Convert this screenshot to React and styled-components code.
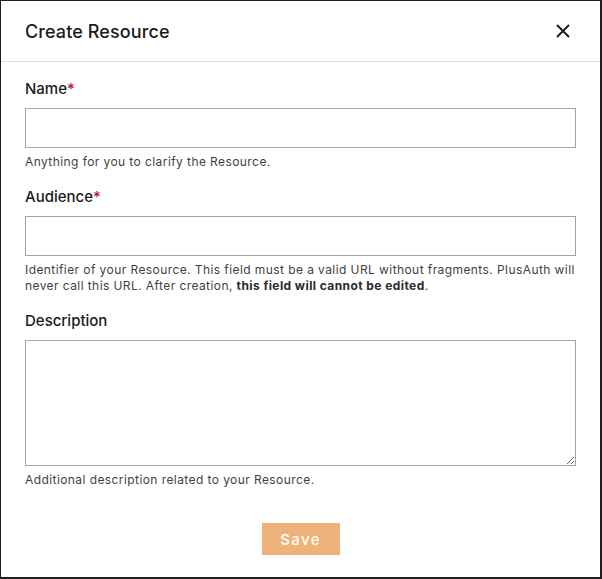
import React from 'react';
import styled, { createGlobalStyle } from 'styled-components';

const GlobalStyle = createGlobalStyle`
	* {
		box-sizing: border-box;
	}
	body {
		margin: 0;
		background: #fff;
		font-family: Inter, 'Noto Sans', sans-serif;
	}
`;

const Modal = styled.div`
	width: 602px;
	height: 579px;
	border: 1px solid #1e1e1e;
	border-right-width: 2px;
	border-bottom-width: 2px;
	background: #fff;
	display: flex;
	flex-direction: column;
`;

const Header = styled.header`
	height: 61px;
	display: flex;
	align-items: center;
	justify-content: space-between;
	padding: 0 25px 0 24px;
	border-bottom: 1px solid #dedede;
	flex-shrink: 0;
`;

const Title = styled.h2`
	margin: 0;
	font-size: 18px;
	font-weight: 500;
	color: #1a1a1a;
	letter-spacing: 0.1px;
`;

const CloseButton = styled.button`
	border: none;
	background: none;
	padding: 0;
	width: 24px;
	height: 24px;
	display: flex;
	align-items: center;
	justify-content: center;
	cursor: pointer;
	color: #1a1a1a;
`;

const Body = styled.form`
	padding: 17px 24px 0 24px;
	display: flex;
	flex-direction: column;
`;

const Field = styled.div`
	display: flex;
	flex-direction: column;
	margin-bottom: 17px;
`;

const Label = styled.label`
	font-size: 15px;
	font-weight: 500;
	color: #1a1a1a;
	line-height: 20px;
	margin-bottom: 9px;
`;

const Required = styled.span`
	color: #b3202a;
`;

const Input = styled.input`
	height: 40px;
	border: 1px solid #a3a3a3;
	border-radius: 0;
	padding: 0 10px;
	font-family: inherit;
	font-size: 14px;
	margin-bottom: 6px;
`;

const TextArea = styled.textarea`
	height: 126px;
	border: 1px solid #a3a3a3;
	border-radius: 0;
	padding: 8px 10px;
	font-family: inherit;
	font-size: 14px;
	resize: vertical;
	margin-bottom: 6px;
`;

const Hint = styled.p`
	margin: 0;
	font-size: 12px;
	line-height: 16px;
	color: #3f3f3f;
	letter-spacing: 0.42px;

	strong {
		font-weight: 700;
		color: #2a2a2a;
	}
`;

const Footer = styled.div`
	display: flex;
	justify-content: center;
	padding-top: 18px;
`;

const SaveButton = styled.button`
	width: 78px;
	height: 32px;
	border: none;
	border-radius: 0;
	background: #eeb27a;
	color: #fff;
	font-family: inherit;
	font-size: 15px;
	font-weight: 500;
	letter-spacing: 1.4px;
	cursor: pointer;
`;

const App = () => {
	return (
		<>
			<GlobalStyle />
			<Modal>
				<Header>
					<Title>Create Resource</Title>
					<CloseButton type="button" aria-label="Close">
						<svg width="16" height="16" viewBox="0 0 16 16">
							<path d="M2 2 L14 14 M14 2 L2 14" stroke="currentColor" strokeWidth="1.9" fill="none" />
						</svg>
					</CloseButton>
				</Header>
				<Body onSubmit={(e) => e.preventDefault()}>
					<Field>
						<Label>
							Name<Required>*</Required>
						</Label>
						<Input type="text" />
						<Hint>Anything for you to clarify the Resource.</Hint>
					</Field>
					<Field>
						<Label>
							Audience<Required>*</Required>
						</Label>
						<Input type="text" />
						<Hint>
							Identifier of your Resource. This field must be a valid URL without fragments. PlusAuth will
							never call this URL. After creation, <strong>this field will cannot be edited</strong>.
						</Hint>
					</Field>
					<Field>
						<Label>Description</Label>
						<TextArea />
						<Hint>Additional description related to your Resource.</Hint>
					</Field>
					<Footer>
						<SaveButton type="submit">Save</SaveButton>
					</Footer>
				</Body>
			</Modal>
		</>
	);
};

export default App;
